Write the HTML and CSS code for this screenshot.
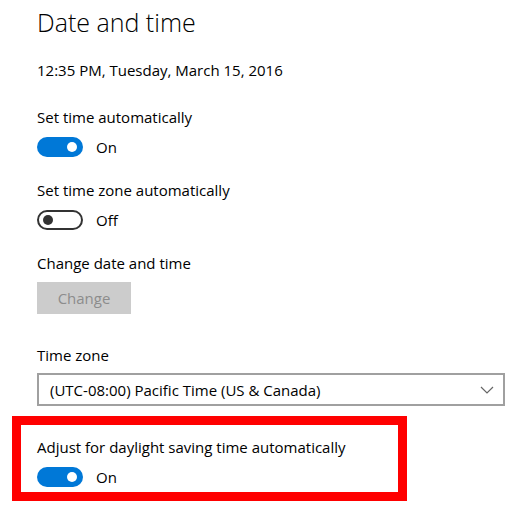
FILE: index.html
```html
<!DOCTYPE html>
<html lang="en">
<head>
    <meta charset="UTF-8">
    <meta name="viewport" content="width=device-width, initial-scale=1.0">
    <title>Date and time</title>
    <link rel="stylesheet" href="styles.css">
</head>
<body>
    <main class="page">
        <h1 class="title">Date and time</h1>
        <p class="now">12:35 PM, Tuesday, March 15, 2016</p>

        <section class="setting auto-time">
            <div class="label">Set time automatically</div>
            <div class="toggle-row">
                <span class="toggle on"><span class="knob"></span></span>
                <span class="state">On</span>
            </div>
        </section>

        <section class="setting auto-zone">
            <div class="label">Set time zone automatically</div>
            <div class="toggle-row">
                <span class="toggle off"><span class="knob"></span></span>
                <span class="state">Off</span>
            </div>
        </section>

        <section class="setting manual">
            <div class="label">Change date and time</div>
            <button class="btn" disabled>Change</button>
        </section>

        <section class="setting zone">
            <div class="label">Time zone</div>
            <div class="select">
                <span>(UTC-08:00) Pacific Time (US &amp; Canada)</span>
                <svg class="chevron" width="14" height="8" viewBox="0 0 14 8"><path d="M1 1l6 6 6-6" fill="none" stroke="#666" stroke-width="1.2"/></svg>
            </div>
        </section>

        <section class="setting highlight">
            <div class="label">Adjust for daylight saving time automatically</div>
            <div class="toggle-row">
                <span class="toggle on"><span class="knob"></span></span>
                <span class="state">On</span>
            </div>
        </section>
    </main>
</body>
</html>
```

FILE: styles.css
```css
body {
    margin: 0;
    background: #ffffff;
    color: #000000;
    font-family: 'Open Sans', 'Noto Sans', sans-serif;
    font-size: 15px;
}

.page {
    padding: 6px 12px 0 12px;
}

.title {
    margin: 0 0 22px 25px;
    font-size: 25px;
    font-weight: 300;
    line-height: 32px;
}

.now {
    margin: 0 0 27px 25px;
    line-height: 20px;
}

.setting {
    padding-left: 25px;
    margin-bottom: 23px;
}

.label {
    line-height: 20px;
    margin-bottom: 10px;
}

.toggle-row {
    display: flex;
    align-items: center;
    gap: 13px;
    height: 20px;
}

.toggle {
    width: 46px;
    height: 20px;
    box-sizing: border-box;
    border-radius: 10px;
    display: flex;
    align-items: center;
    padding: 0 6px;
}

.toggle .knob {
    width: 10px;
    height: 10px;
    border-radius: 50%;
}

.toggle.on {
    background: #0078d7;
    justify-content: flex-end;
}

.toggle.on .knob {
    background: #ffffff;
}

.toggle.off {
    border: 2px solid #333333;
    padding: 0 4px;
}

.toggle.off .knob {
    background: #333333;
}

.manual .label {
    margin-bottom: 9px;
}

.btn {
    width: 94px;
    height: 32px;
    border: none;
    background: #cccccc;
    color: #8c8c8c;
    font-family: inherit;
    font-size: 15px;
    padding: 0;
}

.manual {
    margin-bottom: 31px;
}

.zone {
    margin-bottom: 10px;
}

.zone .label {
    margin-bottom: 8px;
}

.select {
    width: 468px;
    height: 33px;
    box-sizing: border-box;
    border: 2px solid #a0a0a0;
    display: flex;
    align-items: center;
    justify-content: space-between;
    padding: 0 9px 0 11px;
}

.highlight {
    width: 395px;
    box-sizing: border-box;
    border: 9px solid #ff0000;
    padding: 12px 0 5px 16px;
    margin-bottom: 0;
}
```
